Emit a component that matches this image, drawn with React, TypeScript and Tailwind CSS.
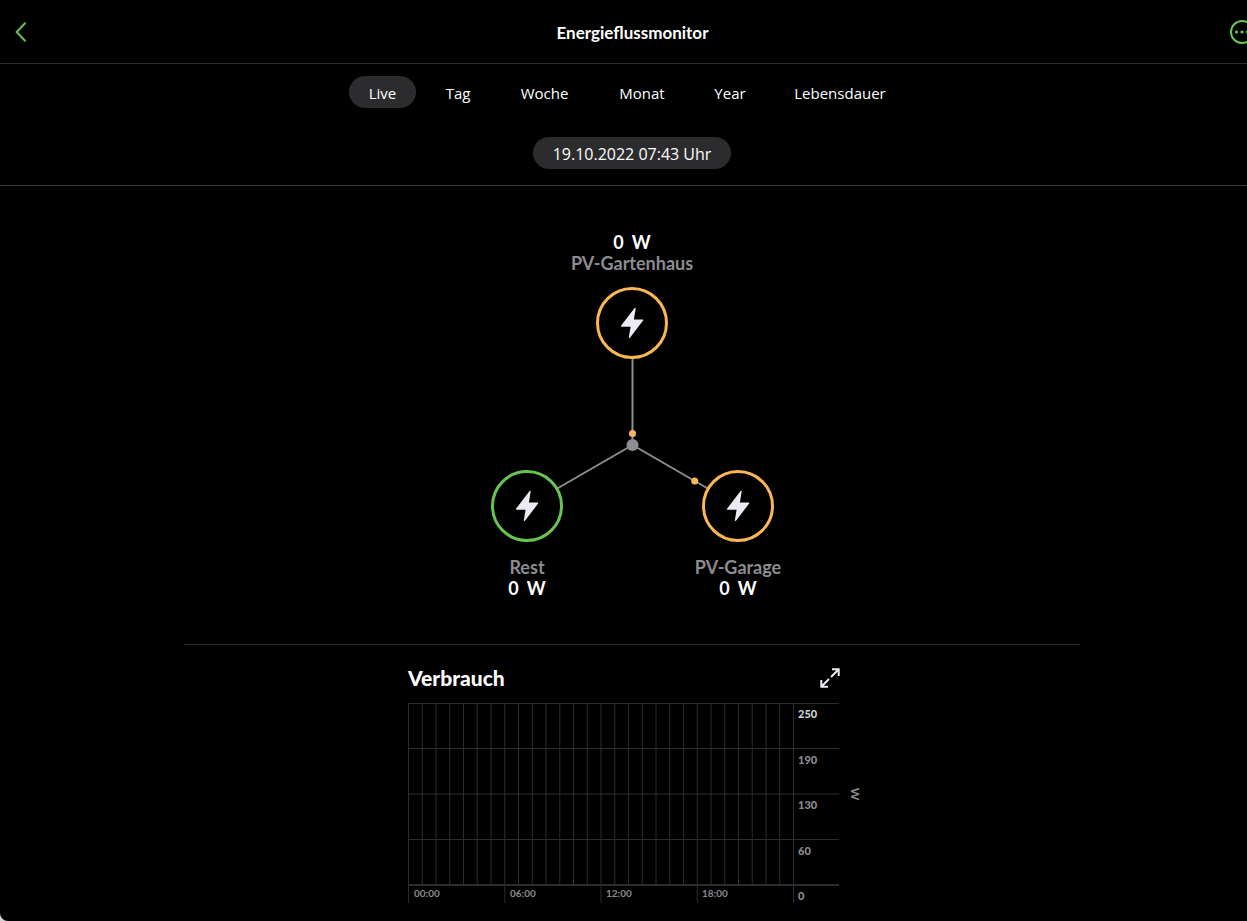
const tabs = [
  { label: "Live", width: "w-[67px]", active: true },
  { label: "Tag", width: "w-16", active: false },
  { label: "Woche", width: "w-[89px]", active: false },
  { label: "Monat", width: "w-[86px]", active: false },
  { label: "Year", width: "w-[70px]", active: false },
  { label: "Lebensdauer", width: "w-[130px]", active: false },
];

const columns = Array.from({ length: 29 }, (_, i) => i);
const yLabels = ["250", "190", "130", "60", "0"];
const xLabels = ["00:00", "06:00", "12:00", "18:00"];
const rowY = [0.5, 45.5, 91, 136.5, 182];

function Bolt() {
  return (
    <svg width="24" height="32" viewBox="0 0 24 32" aria-hidden="true">
      <path
        d="M14.6 1L1 18.7Q.6 19.7 1.5 19.7H10.6L8.8 30.4Q9 31.6 10 30.7L23.3 13.3Q23.6 12.4 22.7 12.4H13.9L15.7 1.4Q15.5 .2 14.6 1Z"
        fill="#ebebf5"
      />
    </svg>
  );
}

function Ring({ color }: { color: string }) {
  return (
    <div className={`flex size-[72px] items-center justify-center rounded-full border-3 bg-black ${color}`}>
      <Bolt />
    </div>
  );
}

function Value() {
  return (
    <div className="flex justify-center gap-2 text-lg leading-[21px] font-bold text-white">
      <span>0</span>
      <span>W</span>
    </div>
  );
}

function Name({ children }: { children: string }) {
  return <div className="text-lg leading-[21px] font-bold text-[#8d8c91]">{children}</div>;
}

function FlowDiagram() {
  return (
    <section aria-label="Energiefluss" className="relative mx-auto h-[458px] w-[400px] text-center">
      <svg className="absolute inset-0" width="400" height="458" aria-hidden="true">
        <path d="M200.5 170V259M200.5 259L95 320M200.5 259L306 320" stroke="#8e8d92" strokeWidth="2" fill="none" />
        <circle cx="200.5" cy="259" r="6" fill="#8e8d92" />
        <circle cx="200.5" cy="247.5" r="3.5" fill="#fcb657" />
        <circle cx="262.7" cy="295" r="3.5" fill="#fcb657" />
      </svg>
      <div className="absolute top-[46px] left-[100px] flex w-[200px] flex-col items-center">
        <Value />
        <Name>PV-Gartenhaus</Name>
        <div className="mt-[13px]">
          <Ring color="border-[#fcb657]" />
        </div>
      </div>
      <div className="absolute top-[284px] left-[20px] flex w-[150px] flex-col items-center">
        <div className="mb-[15px]">
          <Ring color="border-[#69c350]" />
        </div>
        <Name>Rest</Name>
        <Value />
      </div>
      <div className="absolute top-[284px] left-[231px] flex w-[150px] flex-col items-center">
        <div className="mb-[15px]">
          <Ring color="border-[#fcb657]" />
        </div>
        <Name>PV-Garage</Name>
        <Value />
      </div>
    </section>
  );
}

function Chart() {
  return (
    <svg width="460" height="201" className="block overflow-visible" role="img" aria-label="Verbrauch in W">
      <g stroke="#2c2c2e" strokeWidth="1">
        {columns.map((i) => (
          <line key={i} x1={0.5 + i * 13.75} x2={0.5 + i * 13.75} y1="0" y2={i % 7 === 0 ? 200 : 182} />
        ))}
        {rowY.map((y, i) => (
          <line key={y} x1="0" x2="431" y1={y} y2={y} strokeWidth={i === 4 ? 2 : 1} />
        ))}
      </g>
      <g fontSize="11" fontWeight="900">
        {yLabels.map((t, i) => (
          <text key={t} x="390" y={Math.round(15 + i * 45.5)} fill={i === 0 ? "#d1d1d6" : "#8d8c91"}>
            {t}
          </text>
        ))}
      </g>
      <g fontSize="10" fontWeight="700" fill="#8d8c91">
        {xLabels.map((t, i) => (
          <text key={t} x={6 + Math.round(i * 96)} y="194">
            {t}
          </text>
        ))}
      </g>
      <text fontSize="12" fontWeight="700" fill="#8d8c91" textAnchor="middle" transform="translate(443 91) rotate(90)">
        W
      </text>
    </svg>
  );
}

export default function App() {
  return (
    <div className="min-h-screen overflow-hidden bg-[#d4d4d4]">
      <div className="min-h-screen overflow-hidden rounded-bl-lg bg-black font-[Lato,sans-serif] text-white">
        <div className="w-[calc(100%+17px)]">
          <header className="flex h-16 items-center justify-between border-b border-[#2c2c2e] pr-2.5 pl-[15px]">
            <button type="button" aria-label="Zurück" className="w-5">
              <svg width="12" height="20" viewBox="0 0 12 20" fill="none" aria-hidden="true">
                <path d="M10.5 .7L1.7 10L10.5 19.3" stroke="#69c350" strokeWidth="2" />
              </svg>
            </button>
            <h1 className="pt-[3px] text-[17px] leading-6 font-bold">Energieflussmonitor</h1>
            <button type="button" aria-label="Mehr">
              <svg width="24" height="24" viewBox="0 0 24 24" fill="none" aria-hidden="true">
                <circle cx="12" cy="12" r="11" stroke="#69c350" strokeWidth="2" />
                <circle cx="6.5" cy="12" r="1.6" fill="#69c350" />
                <circle cx="12" cy="12" r="1.6" fill="#69c350" />
                <circle cx="17.5" cy="12" r="1.6" fill="#69c350" />
              </svg>
            </button>
          </header>
          <div className="flex flex-col items-center border-b border-[#38383a] pt-3 pb-4 font-['Open_Sans',sans-serif]">
            <nav className="flex">
              {tabs.map((tab) => (
                <button
                  key={tab.label}
                  type="button"
                  aria-pressed={tab.active}
                  className={`mr-2.5 h-8 rounded-full pt-0.5 text-[15px] whitespace-nowrap ${tab.width} ${tab.active ? "bg-[#2c2c2e]" : ""}`}
                >
                  {tab.label}
                </button>
              ))}
            </nav>
            <button type="button" className="mt-[29px] h-8 w-[198px] rounded-full bg-[#2c2c2e] pt-0.5 text-base">
              19.10.2022 07:43 Uhr
            </button>
          </div>
          <main>
            <FlowDiagram />
            <section className="mx-auto max-w-4xl border-t border-[#2c2c2e]">
              <div className="mx-auto w-[448px]">
                <div className="flex h-[58px] items-center justify-between pt-2 pr-4">
                  <h2 className="text-[21px] leading-7 font-black">Verbrauch</h2>
                  <button type="button" aria-label="Vergrößern">
                    <svg width="20" height="20" viewBox="0 0 20 20" fill="none" stroke="#ebebf5" strokeWidth="2" aria-hidden="true">
                      <path d="M12 1.3H18.7V8M18.7 1.3L11 9M8 18.7H1.3V12M1.3 18.7L9 11" />
                    </svg>
                  </button>
                </div>
                <Chart />
              </div>
            </section>
          </main>
        </div>
      </div>
    </div>
  );
}
